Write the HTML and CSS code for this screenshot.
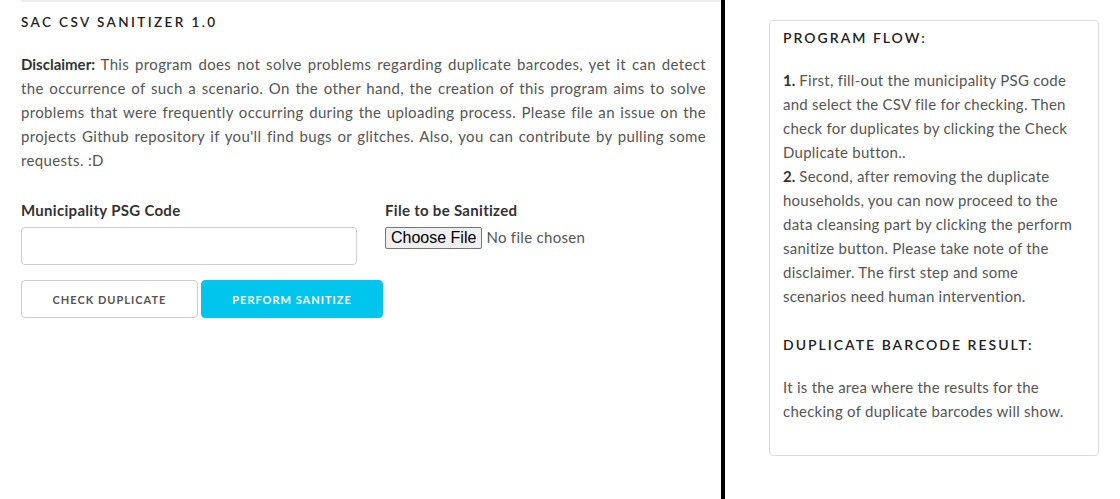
FILE: index.html
```html
<!DOCTYPE html>
<html>
<head>
<meta charset="utf-8">
<link rel="stylesheet" href="styles.css">
</head>
<body>
<div class="page">
  <main class="main">
    <div class="main-inner">
      <h1 class="title">SAC CSV SANITIZER 1.0</h1>
      <p class="disclaimer"><strong>Disclaimer:</strong> This program does not solve problems regarding duplicate barcodes, yet it can detect the occurrence of such a scenario. On the other hand, the creation of this program aims to solve problems that were frequently occurring during the uploading process. Please file an issue on the projects Github repository if you'll find bugs or glitches. Also, you can contribute by pulling some requests. :D</p>
      <div class="form-grid">
        <div class="field">
          <label class="label">Municipality PSG Code</label>
          <input class="text-input" type="text">
        </div>
        <div class="field">
          <label class="label">File to be Sanitized</label>
          <input class="file-input" type="file">
        </div>
      </div>
      <div class="actions">
        <button class="btn btn-outline">CHECK DUPLICATE</button><button class="btn btn-primary">PERFORM SANITIZE</button>
      </div>
    </div>
  </main>
  <div class="divider"></div>
  <aside class="side">
    <div class="card">
      <h2 class="card-title">PROGRAM FLOW:</h2>
      <p class="card-text"><strong>1.</strong> First, fill-out the municipality PSG code and select the CSV file for checking. Then check for duplicates by clicking the Check Duplicate button..<br><strong>2.</strong> Second, after removing the duplicate households, you can now proceed to the data cleansing part by clicking the perform sanitize button. Please take note of the disclaimer. The first step and some scenarios need human intervention.</p>
      <h2 class="card-title card-title-2">DUPLICATE BARCODE RESULT:</h2>
      <p class="card-text">It is the area where the results for the checking of duplicate barcodes will show.</p>
    </div>
  </aside>
</div>
</body>
</html>
```

FILE: styles.css
```css
* { box-sizing: border-box; }
html, body { margin: 0; padding: 0; background: #fff; }
body {
  font-family: "Lato", "Open Sans", sans-serif;
  color: #555;
  font-size: 15px;
  line-height: 24px;
  height: 499px;
  overflow: hidden;
}
.page {
  display: flex;
  height: 499px;
}
.main {
  width: 721px;
  padding-left: 21px;
  flex: none;
}
.main-inner {
  border-top: 2px solid #eee;
  padding-right: 15px;
}
.title {
  margin: 10px 0 0;
  font-size: 13.5px;
  font-weight: 600;
  letter-spacing: 2.4px;
  color: #222;
  line-height: 20px;
}
.disclaimer {
  margin: 20px 0 0;
  text-align: justify;
  letter-spacing: 0.35px;
}
.disclaimer strong { color: #333; font-weight: 700; letter-spacing: 0; }
.form-grid {
  display: grid;
  grid-template-columns: 336px 1fr;
  column-gap: 28px;
  margin-top: 26px;
}
.field { display: flex; flex-direction: column; }
.label {
  font-weight: 700;
  color: #333;
  font-size: 15px;
  letter-spacing: 0.3px;
  line-height: 24px;
  margin-bottom: 5px;
}
.text-input {
  height: 38px;
  border: 1px solid #ccc;
  border-radius: 4px;
  width: 336px;
  font: inherit;
}
.file-input {
  font-family: inherit;
  font-size: 15px;
  letter-spacing: 0.3px;
  color: #555;
}
.file-input::file-selector-button {
  font-family: "Liberation Sans", Arial, sans-serif;
  font-size: 16px;
  letter-spacing: 0;
  background: #efefef;
  border: 1px solid #767676;
  border-radius: 2px;
  padding: 1px 5px;
  color: #000;
  margin-right: 4px;
}
.actions {
  display: flex;
  gap: 3px;
  margin-top: 15px;
}
.btn {
  height: 38px;
  font-family: inherit;
  font-size: 11px;
  font-weight: 700;
  letter-spacing: 1px;
  border-radius: 4px;
}
.btn-outline {
  width: 177px;
  background: #fff;
  border: 1px solid #ccc;
  color: #555;
}
.btn-primary {
  width: 182px;
  background: #00c6ee;
  border: 1px solid #00c6ee;
  color: #fff;
}
.divider {
  width: 4px;
  background: #000;
  flex: none;
}
.side {
  flex: 1;
  padding: 20px 21px 0 44px;
}
.card {
  border: 1px solid #ddd;
  border-radius: 4px;
  padding: 5px 13px 22px;
  height: 436px;
}
.card-title {
  margin: 0;
  font-size: 14px;
  font-weight: 600;
  letter-spacing: 2px;
  color: #222;
  line-height: 24px;
}
.card-title-2 { margin-top: 25px; }
.card-text {
  margin: 18px 0 0;
  font-size: 15px;
  letter-spacing: 0.25px;
}
.card-text strong { color: #333; letter-spacing: 0; }
```
